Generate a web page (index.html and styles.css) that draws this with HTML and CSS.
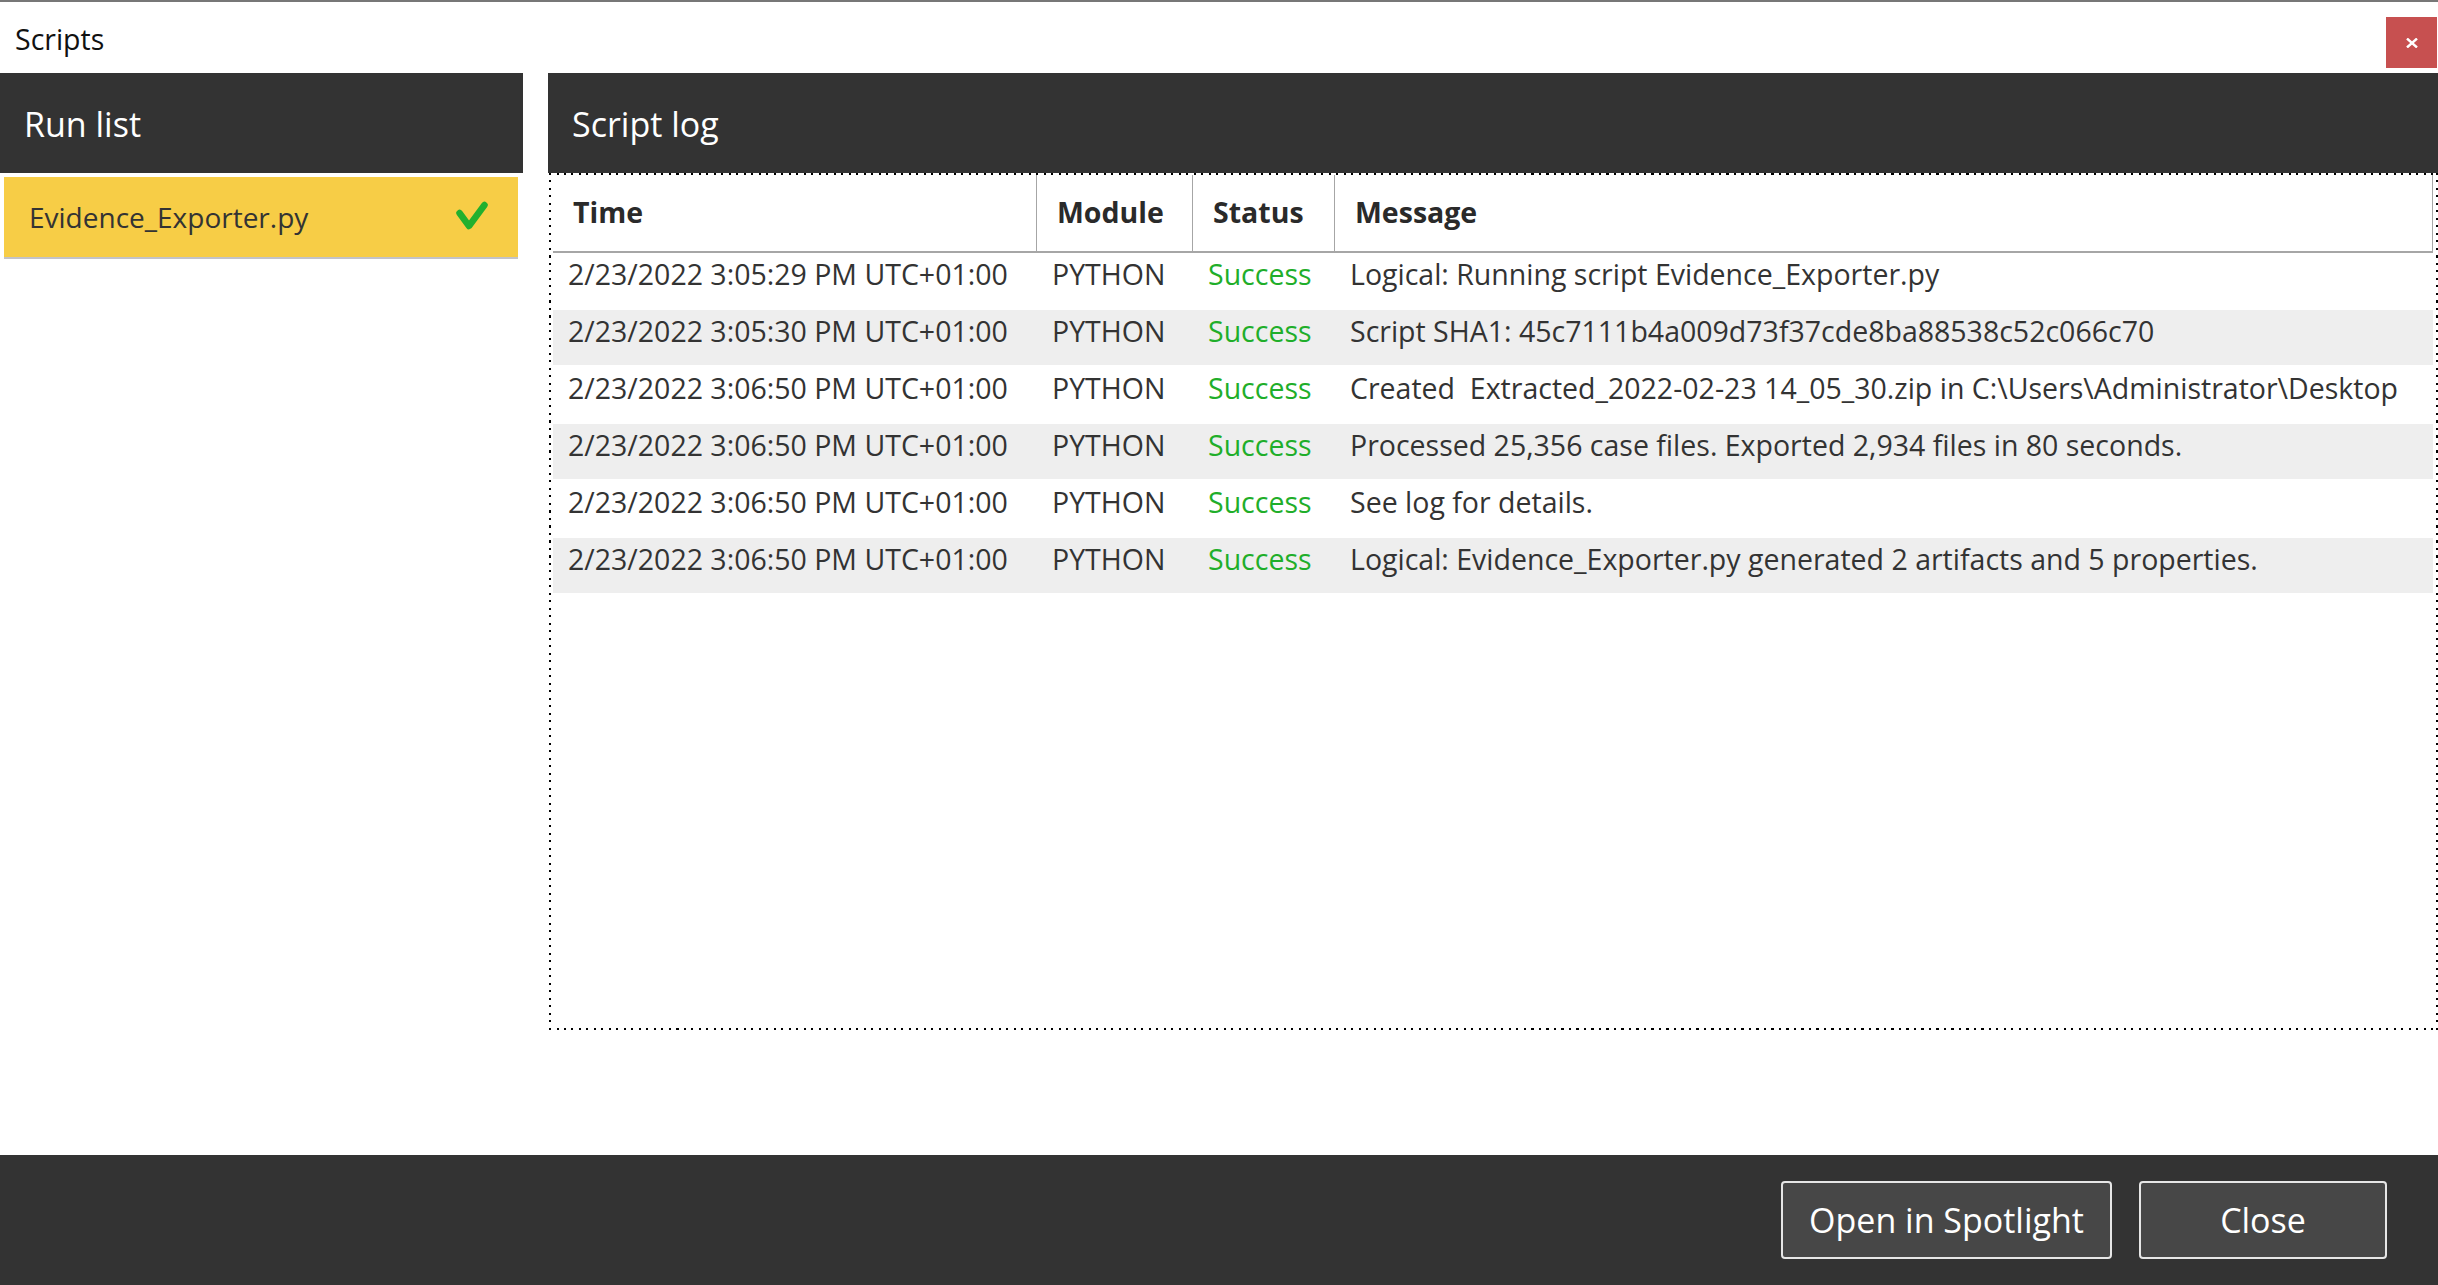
FILE: index.html
```html
<!DOCTYPE html>
<html lang="en">
<head>
<meta charset="utf-8">
<title>Scripts</title>
<link rel="stylesheet" href="styles.css">
</head>
<body>
<div class="window">
  <div class="titlebar">
    <span class="title">Scripts</span>
    <button class="close-x" aria-label="Close">
      <svg width="12" height="10" viewBox="0 0 12 10"><path d="M1 0.5 L11 9.5 M11 0.5 L1 9.5" stroke="#fff" stroke-width="2.4" fill="none"/></svg>
    </button>
  </div>
  <div class="main">
    <section class="runlist">
      <div class="panel-head">Run list</div>
      <div class="run-item">
        <span class="run-name">Evidence_Exporter.py</span>
        <svg class="check" width="34" height="32" viewBox="0 0 34 32"><path d="M4.5 13 L14 26 L29.5 5" stroke="#22b02e" stroke-width="6.5" stroke-linecap="round" stroke-linejoin="round" fill="none"/></svg>
      </div>
    </section>
    <section class="scriptlog">
      <div class="panel-head">Script log</div>
      <div class="log-box">
        <div class="log-row log-header">
          <div class="cell">Time</div>
          <div class="cell">Module</div>
          <div class="cell">Status</div>
          <div class="cell">Message</div>
        </div>
        <div class="log-row">
          <div class="cell">2/23/2022 3:05:29 PM UTC+01:00</div>
          <div class="cell">PYTHON</div>
          <div class="cell ok">Success</div>
          <div class="cell">Logical: Running script Evidence_Exporter.py</div>
        </div>
        <div class="log-row alt">
          <div class="cell">2/23/2022 3:05:30 PM UTC+01:00</div>
          <div class="cell">PYTHON</div>
          <div class="cell ok">Success</div>
          <div class="cell">Script SHA1: 45c7111b4a009d73f37cde8ba88538c52c066c70</div>
        </div>
        <div class="log-row">
          <div class="cell">2/23/2022 3:06:50 PM UTC+01:00</div>
          <div class="cell">PYTHON</div>
          <div class="cell ok">Success</div>
          <div class="cell">Created&nbsp; Extracted_2022-02-23 14_05_30.zip in C:\Users\Administrator\Desktop</div>
        </div>
        <div class="log-row alt">
          <div class="cell">2/23/2022 3:06:50 PM UTC+01:00</div>
          <div class="cell">PYTHON</div>
          <div class="cell ok">Success</div>
          <div class="cell">Processed 25,356 case files. Exported 2,934 files in 80 seconds.</div>
        </div>
        <div class="log-row">
          <div class="cell">2/23/2022 3:06:50 PM UTC+01:00</div>
          <div class="cell">PYTHON</div>
          <div class="cell ok">Success</div>
          <div class="cell">See log for details.</div>
        </div>
        <div class="log-row alt">
          <div class="cell">2/23/2022 3:06:50 PM UTC+01:00</div>
          <div class="cell">PYTHON</div>
          <div class="cell ok">Success</div>
          <div class="cell">Logical: Evidence_Exporter.py generated 2 artifacts and 5 properties.</div>
        </div>
      </div>
    </section>
  </div>
  <div class="footer">
    <button class="btn btn-spot">Open in Spotlight</button>
    <button class="btn btn-close">Close</button>
  </div>
</div>
</body>
</html>
```

FILE: styles.css
```css
* { box-sizing: border-box; }

html, body {
  margin: 0;
  padding: 0;
  background: #ffffff;
}

body {
  font-family: "Open Sans", "Noto Sans", sans-serif;
  color: #333333;
}

.window {
  height: 1285px;
  display: flex;
  flex-direction: column;
  border-top: 2px solid #777777;
}

.titlebar {
  height: 71px;
  display: flex;
  justify-content: space-between;
  align-items: flex-start;
}

.title {
  font-size: 28.5px;
  line-height: 38px;
  padding: 18px 0 0 15px;
  color: #111111;
}

.close-x {
  margin-top: 15px;
  margin-right: 1px;
  width: 51px;
  height: 51px;
  border: none;
  padding: 0;
  background: #c75050;
  display: flex;
  align-items: center;
  justify-content: center;
}

.main {
  flex: 1;
  display: grid;
  grid-template-columns: 523px 1fr;
  column-gap: 25px;
  min-height: 0;
}

.panel-head {
  height: 100px;
  background: #333333;
  color: #ffffff;
  font-size: 34px;
  line-height: 46px;
  padding: 28px 0 0 24px;
}

.run-item {
  margin: 4px 5px 0 4px;
  height: 82px;
  background: #f7cd46;
  border-bottom: 2px solid #c3c3c8;
  display: flex;
  align-items: flex-start;
  justify-content: space-between;
  padding: 20px 29px 0 25px;
}

.run-name {
  font-size: 28px;
  line-height: 41px;
  color: #333333;
}

.check {
  margin-top: 3px;
}

.scriptlog {
  display: flex;
  flex-direction: column;
  padding-bottom: 125px;
  min-height: 0;
}

.log-box {
  flex: 1;
  margin-left: 1px;
  padding: 2px 5px 2px 4px;
  background:
    repeating-linear-gradient(to right, #000 0 2px, transparent 2px 7.5px) left top / 100% 2px no-repeat,
    repeating-linear-gradient(to right, #000 0 2px, transparent 2px 7.5px) left bottom / 100% 2px no-repeat,
    repeating-linear-gradient(to bottom, #000 0 2px, transparent 2px 7.5px) left top / 2px 100% no-repeat,
    repeating-linear-gradient(to bottom, #000 0 2px, transparent 2px 7.5px) right top / 2px 100% no-repeat,
    #ffffff;
}

.log-row {
  display: grid;
  grid-template-columns: 484px 156px 142px 1fr;
  height: 57px;
  border-bottom: 2px solid #ffffff;
  font-size: 28.5px;
  line-height: 38px;
}

.log-row.alt {
  background: #eeeeee;
}

.log-row .cell {
  padding: 2px 0 0 15px;
  white-space: nowrap;
  overflow: hidden;
}

.log-row .cell.ok {
  color: #1fae2a;
}

.log-header {
  height: 78px;
  border-bottom: 2px solid #a6a6a6;
  font-weight: 700;
  color: #2a2a2a;
}

.log-header .cell {
  padding: 18px 0 0 20px;
  border-right: 1px solid #a6a6a6;
}

.footer {
  height: 130px;
  background: #333333;
  display: flex;
  justify-content: flex-end;
  align-items: center;
  gap: 27px;
  padding-right: 51px;
}

.btn {
  height: 78px;
  background: #474747;
  border: 2px solid #e6e6e6;
  border-radius: 4px;
  color: #ffffff;
  font-family: "Open Sans", "Noto Sans", sans-serif;
  font-size: 34px;
  padding: 0;
}

.btn-spot { width: 331px; }
.btn-close { width: 248px; }
```
